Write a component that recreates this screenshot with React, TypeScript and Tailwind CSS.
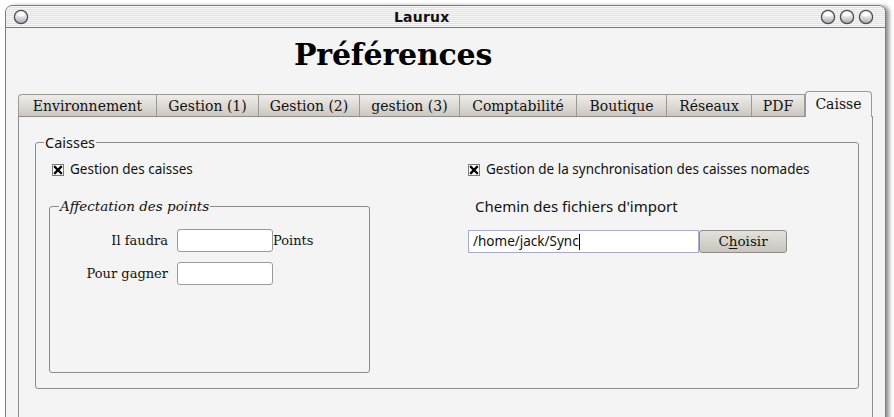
import React from "react";

function Bubble({ id }: { id: string }) {
  return (
    <svg width="16" height="16" viewBox="0 0 16 16" className="block">
      <defs>
        <linearGradient id={id} x1="0" y1="0" x2="0" y2="1">
          <stop offset="0" stopColor="#fbfbfb" />
          <stop offset="0.55" stopColor="#d8dde2" />
          <stop offset="1" stopColor="#9ea7b1" />
        </linearGradient>
      </defs>
      <circle cx="8" cy="8" r="6.6" fill={`url(#${id})`} stroke="#4e4e4e" strokeWidth="1.3" />
      <ellipse cx="8" cy="5.4" rx="3.8" ry="2.1" fill="#ffffff" opacity="0.85" />
    </svg>
  );
}

function Check() {
  return (
    <svg width="12" height="12" viewBox="0 0 12 12" className="block shrink-0">
      <rect x="0.5" y="0.5" width="11" height="11" fill="#ffffff" stroke="#7a7a7a" />
      <path d="M3 3 L9 9 M9 3 L3 9" stroke="#000" strokeWidth="2.3" strokeLinecap="square" />
    </svg>
  );
}

const tabs: { label: string; w: string }[] = [
  { label: "Environnement", w: "w-[138px] rounded-tl-[4px]" },
  { label: "Gestion (1)", w: "w-[102px]" },
  { label: "Gestion (2)", w: "w-[101px]" },
  { label: "gestion (3)", w: "w-[100px]" },
  { label: "Comptabilité", w: "w-[117px]" },
  { label: "Boutique", w: "w-[90px]" },
  { label: "Réseaux", w: "w-[85px]" },
  { label: "PDF", w: "w-[54px] border-r" },
];

export default function App() {
  return (
    <div className="w-[894px] h-[417px] bg-white overflow-hidden pt-[5px] pl-[5px]">
      <div className="w-[881px] h-[430px] border border-[#7c7c7c] rounded-t-[7px] bg-[#f4f4f4] shadow-[4px_0_4px_-1px_rgba(0,0,0,0.45)] flex flex-col">
        {/* title bar */}
        <div className="h-[22px] shrink-0 border-b border-[#7a7a7a] rounded-t-[7px] bg-[repeating-linear-gradient(to_bottom,#f6f6f6_0px,#f6f6f6_1px,#e3e3e3_1px,#e3e3e3_2px)] flex items-center">
          <div className="ml-[7px]">
            <Bubble id="b0" />
          </div>
          <div className="ml-[365px] font-['DejaVu_Sans',sans-serif] font-bold text-[14px] leading-none text-[#111] tracking-[0.2px]">
            Laurux
          </div>
          <div className="ml-auto mr-[11px] flex gap-[3px]">
            <Bubble id="b1" />
            <Bubble id="b2" />
            <Bubble id="b3" />
          </div>
        </div>

        {/* heading */}
        <div className="h-[64px] shrink-0 pl-[288px] pt-[9px]">
          <h1 className="font-['DejaVu_Serif',serif] font-bold text-[30px] leading-[36px] text-black tracking-[-0.2px]">
            Préférences
          </h1>
        </div>

        {/* tabs */}
        <div className="ml-[12px] h-[25px] flex items-end shrink-0 relative z-10">
          {tabs.map((t) => (
            <div
              key={t.label}
              className={`${t.w} h-[22px] mb-px border-t border-l border-[#9c9a96] bg-[linear-gradient(#efedea,#ccc8c0)] flex items-center justify-center font-['DejaVu_Serif',serif] text-[14px] text-[#111] leading-none`}
            >
              {t.label}
            </div>
          ))}
          <div className="w-[67px] h-[26px] border border-b-0 border-[#9c9a96] rounded-t-[4px] bg-[#f4f4f4] flex items-center justify-center pb-[2px] font-['DejaVu_Serif',serif] text-[14px] text-[#111] leading-none">
            Caisse
          </div>
        </div>

        {/* panel */}
        <div className="ml-[12px] -mt-px w-[855px] flex-1 border border-[#8e8e8e] pt-[15px] pl-[16px]">
          <fieldset className="w-[824px] h-[257px] border border-[#8c8c8c] rounded-[3px] font-['Noto_Sans',sans-serif] text-[13.5px] text-[#111]">
            <legend className="ml-[8px] px-px text-[14.5px] leading-[20px]">Caisses</legend>
            <div className="flex pl-[13px]">
              {/* left column */}
              <div className="w-[419px] shrink-0 flex flex-col">
                <div className="flex items-center gap-[6px] ml-[3px] mt-[8px] h-[20px]">
                  <Check />
                  <span className="leading-none">Gestion des caisses</span>
                </div>
                <fieldset className="mt-[16px] w-[321px] h-[177px] border border-[#8c8c8c] rounded-[3px] font-['DejaVu_Serif',serif] text-[13px]">
                  <legend className="ml-[9px] px-px italic text-[13.5px] leading-[20px]">Affectation des points</legend>
                  <div className="mt-[13px] flex flex-col gap-[10px]">
                    <div className="flex items-center">
                      <span className="w-[118px] text-right">Il faudra</span>
                      <div className="ml-[9px] w-[96px] h-[23px] bg-white border border-[#9a9a9a] rounded-[3px]" />
                      <span>Points</span>
                    </div>
                    <div className="flex items-center">
                      <span className="w-[118px] text-right">Pour gagner</span>
                      <div className="ml-[9px] w-[96px] h-[23px] bg-white border border-[#9a9a9a] rounded-[3px]" />
                    </div>
                  </div>
                </fieldset>
              </div>
              {/* right column */}
              <div className="flex flex-col">
                <div className="flex items-center gap-[6px] mt-[8px] h-[20px]">
                  <Check />
                  <span className="leading-none">Gestion de la synchronisation des caisses nomades</span>
                </div>
                <div className="ml-[7px] mt-[16px] text-[15px] leading-[20px]">Chemin des fichiers d'import</div>
                <div className="mt-[14px] flex">
                  <div className="w-[231px] h-[23px] bg-white border border-[#a9a9d6] flex items-center pl-[4px]">
                    <span className="leading-none">/home/jack/Sync</span>
                    <span className="w-px h-[16px] bg-black" />
                  </div>
                  <div className="w-[88px] h-[23px] border border-[#8f8d89] rounded-[3px] bg-[linear-gradient(#e4e1dc,#c9c5bd)] flex items-center justify-center font-['DejaVu_Serif',serif] text-[13.5px] leading-none">
                    <span>
                      C<span className="underline underline-offset-2">h</span>oisir
                    </span>
                  </div>
                </div>
              </div>
            </div>
          </fieldset>
        </div>
      </div>
    </div>
  );
}
